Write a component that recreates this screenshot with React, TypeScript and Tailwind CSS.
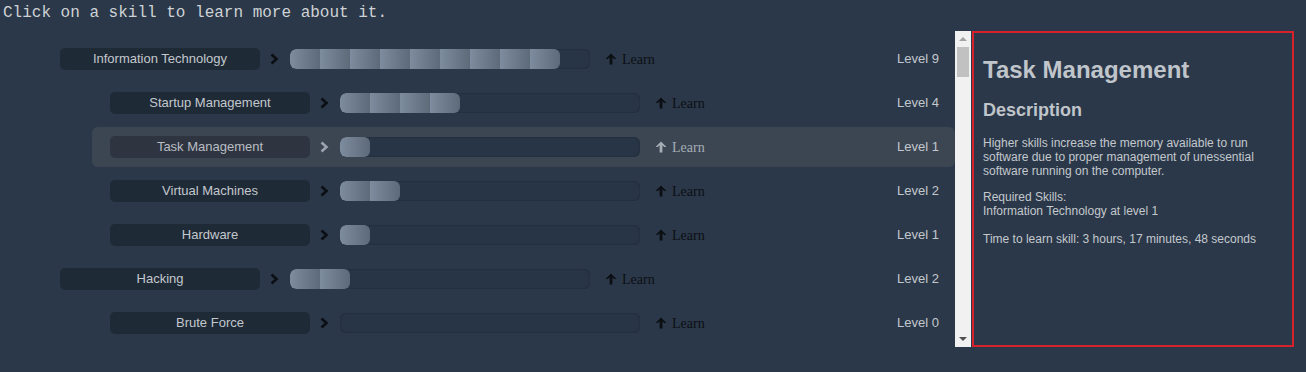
import React from "react";

type Skill = {
  name: string;
  level: number;
  depth: number;
  selected?: boolean;
};

const skills: Skill[] = [
  { name: "Information Technology", level: 9, depth: 0 },
  { name: "Startup Management", level: 4, depth: 1 },
  { name: "Task Management", level: 1, depth: 1, selected: true },
  { name: "Virtual Machines", level: 2, depth: 1 },
  { name: "Hardware", level: 1, depth: 1 },
  { name: "Hacking", level: 2, depth: 0 },
  { name: "Brute Force", level: 0, depth: 1 },
];

function Chevron({ light }: { light?: boolean }) {
  return (
    <svg width="9" height="12" viewBox="0 0 9 12" className="shrink-0">
      <polyline
        points="1.5,1.5 6.5,6 1.5,10.5"
        fill="none"
        stroke={light ? "#9aa3ad" : "#0b0f14"}
        strokeWidth="2.6"
      />
    </svg>
  );
}

function ArrowUp({ light }: { light?: boolean }) {
  const c = light ? "#a6adb5" : "#0b0f14";
  return (
    <svg width="12" height="12" viewBox="0 0 12 12" className="shrink-0">
      <path d="M6 0.5 L11.5 6 L9.2 6 L7.4 4.2 L7.4 11.5 L4.6 11.5 L4.6 4.2 L2.8 6 L0.5 6 Z" fill={c} />
    </svg>
  );
}

function ProgressBar({ level }: { level: number }) {
  return (
    <div className="w-[300px] h-5 rounded-[6px] bg-[#283546] shadow-[inset_0_0_2px_rgba(0,0,0,0.35)] shrink-0 overflow-hidden">
      {level > 0 && (
        <div className="flex h-full rounded-[6px] overflow-hidden" style={{ width: level * 30 }}>
          {Array.from({ length: level }).map((_, i) => (
            <div
              key={i}
              className="w-[30px] h-full bg-gradient-to-r from-[#7d8c9e] to-[#5d6a7a]"
            />
          ))}
        </div>
      )}
    </div>
  );
}

function SkillRow({ skill }: { skill: Skill }) {
  const sel = !!skill.selected;
  return (
    <div
      className={`flex items-center h-10 mb-1 pl-[18px] pr-4 rounded-md ${
        skill.depth === 0 ? "ml-[42px]" : "ml-[92px]"
      } ${sel ? "bg-[#3c4653]" : ""}`}
    >
      <div
        className={`w-[200px] h-[22px] rounded-[5px] flex items-center justify-center text-[13px] shrink-0 ${
          sel ? "bg-[#2e3540] text-[#b9bec4]" : "bg-[#1f2a37] text-[#c3c8cd]"
        }`}
      >
        {skill.name}
      </div>
      <div className="ml-[10px] mr-[11px] flex items-center">
        <Chevron light={sel} />
      </div>
      <ProgressBar level={skill.level} />
      <div
        className={`ml-[15px] flex items-center gap-[5px] text-[14px] font-['Liberation_Serif',serif] ${
          sel ? "text-[#a6adb5]" : "text-[#0b0f14]"
        }`}
      >
        <ArrowUp light={sel} />
        <span>Learn</span>
      </div>
      <div className="flex-1" />
      <div className="text-[13px] text-[#c3c8cd]">Level {skill.level}</div>
    </div>
  );
}

function Scrollbar() {
  return (
    <div className="w-4 h-full bg-[#f1f1f1] flex flex-col items-center shrink-0">
      <div className="h-4 w-full flex items-center justify-center">
        <div className="w-0 h-0 border-l-[4px] border-r-[4px] border-b-[4px] border-l-transparent border-r-transparent border-b-[#a3a3a3]" />
      </div>
      <div className="w-3 h-[30px] bg-[#c1c1c1]" />
      <div className="flex-1" />
      <div className="h-4 w-full flex items-center justify-center">
        <div className="w-0 h-0 border-l-[4px] border-r-[4px] border-t-[4px] border-l-transparent border-r-transparent border-t-[#505050]" />
      </div>
    </div>
  );
}

export default function App() {
  return (
    <div className="w-[1306px] h-[372px] bg-[#2b3849] font-['Liberation_Sans',Arial,sans-serif] overflow-hidden">
      <div className="h-[25px] pl-[3px] flex items-center text-[16px] text-[#cfd2d5] font-['Liberation_Mono',monospace]">
        Click on a skill to learn more about it.
      </div>
      <div className="mt-[6px] flex h-[316px]">
        {/* skill tree */}
        <div className="w-[955px] h-full pt-[8px] overflow-hidden">
          {skills.map((s) => (
            <SkillRow key={s.name} skill={s} />
          ))}
        </div>
        <Scrollbar />
        {/* detail panel */}
        <div className="ml-px w-[322px] h-full border-2 border-[#d9212b] pl-[9px] pr-3 text-[#c3c8cd]">
          <h1 className="mt-[23px] text-[24px] leading-[28px] font-bold text-[#c0c5cb]">
            Task Management
          </h1>
          <h2 className="mt-[15px] text-[18px] leading-[22px] font-bold text-[#c0c5cb]">
            Description
          </h2>
          <p className="mt-[15px] text-[12px] leading-[14px]">
            Higher skills increase the memory available to run software due to proper management of
            unessential software running on the computer.
          </p>
          <p className="mt-3 text-[12px] leading-[14px]">
            Required Skills:
            <br />
            Information Technology at level 1
            <br />
            <br />
            Time to learn skill: 3 hours, 17 minutes, 48 seconds
          </p>
        </div>
      </div>
    </div>
  );
}
